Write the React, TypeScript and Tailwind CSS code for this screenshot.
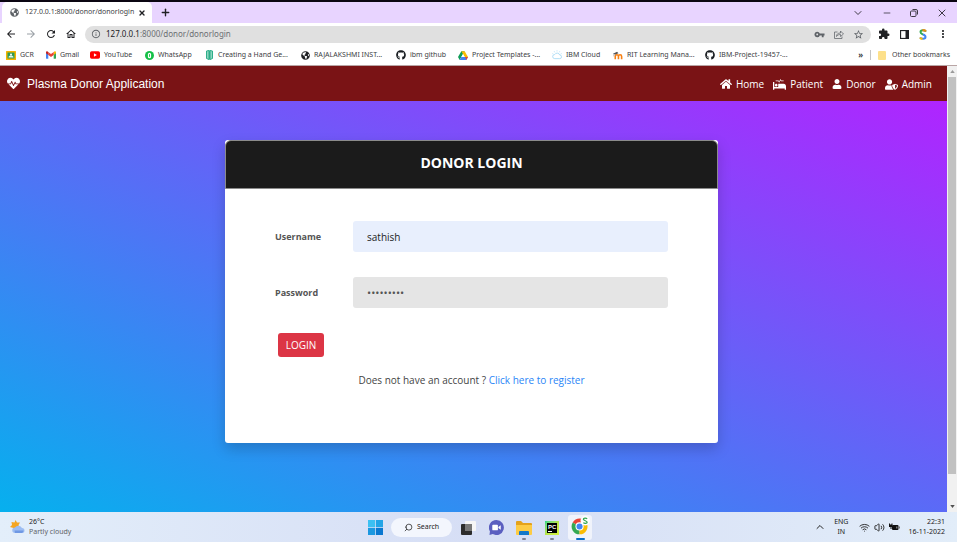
import type { ReactNode } from "react";
import {
  FaGithub,
  FaGlobeAmericas,
  FaHeartbeat,
  FaHome,
  FaProcedures,
  FaUser,
  FaUserShield,
} from "react-icons/fa";
import {
  MdArrowBack,
  MdArrowForward,
  MdExtension,
  MdInfoOutline,
  MdMoreVert,
  MdOutlineHome,
  MdRefresh,
  MdStarBorder,
  MdVpnKey,
} from "react-icons/md";
import { ChevronDown, ChevronUp, Minus, Plus, Search, Volume2, Wifi, X } from "lucide-react";

function ClassroomIcon() {
  return (
    <svg viewBox="0 0 20 18" className="h-[9px] w-[10px]">
      <rect width="20" height="18" rx="1" fill="#f4b400" />
      <rect x="3" y="3" width="14" height="12" fill="#2f9a56" />
      <circle cx="10" cy="7" r="2" fill="#fff" />
      <path d="M5 13c0-3 3-4 5-4s5 1 5 4z" fill="#e8f5e9" />
    </svg>
  );
}

function GmailIcon() {
  return (
    <svg viewBox="0 0 24 18" className="h-[8px] w-[10px]">
      <path d="M0 2v14a2 2 0 0 0 2 2h3.500V8z" fill="#4285f4" />
      <path d="M18.500 18H22a2 2 0 0 0 2-2V2l-5.500 6z" fill="#34a853" />
      <path d="M18.500 1.500V9L24 5V3c0-2.500-3-4-5.500-1.500z" fill="#fbbc04" />
      <path d="M5.500 9V1.500L12 6.500l6.500-5V9L12 14z" fill="#ea4335" />
      <path d="M0 3v2l5.500 4V1.500C3-1 0 .5 0 3z" fill="#c5221f" />
    </svg>
  );
}

function YouTubeIcon() {
  return (
    <svg viewBox="0 0 24 18" className="h-[8px] w-[11px]">
      <rect width="24" height="18" rx="4" fill="#f00" />
      <path d="M9.500 5v8l7-4z" fill="#fff" />
    </svg>
  );
}

function WhatsAppIcon() {
  return (
    <svg viewBox="0 0 20 20" className="size-[9px]">
      <circle cx="10" cy="10" r="10" fill="#16c047" />
      <rect x="6.500" y="4" width="7" height="12" rx="3.500" fill="#fff" />
      <path d="M10 7v6" stroke="#16c047" strokeWidth="2" />
    </svg>
  );
}

function HandIcon() {
  return (
    <svg viewBox="0 0 14 20" className="h-[10px] w-[7px]" fill="none" stroke="#2fae8a" strokeWidth="2">
      <path d="M1 2l5-1v18l-5-2zM13 2L8 1v18l5-2z" fill="#8fd6c0" />
      <path d="M7 1v18" />
    </svg>
  );
}

function DriveIcon() {
  return (
    <svg viewBox="0 0 24 21" className="h-[9px] w-[10px]">
      <path d="M8 0h8L8 14l-4 7-4-7z" fill="#0f9d58" />
      <path d="M8 0h8l8 14h-8z" fill="#fbbc04" />
      <path d="M8 14h16l-4 7H4z" fill="#4285f4" />
      <path d="M24 14h-7l3 7z" fill="#ea4335" />
      <path d="M12 7l4 7H8z" fill="#fff" />
    </svg>
  );
}

function CloudIcon() {
  return (
    <svg viewBox="0 0 22 20" className="h-[10px] w-[11px]" fill="none" stroke="#8fd0f2" strokeWidth="1.500">
      <path d="M6 18h11a4 4 0 0 0 0-8 6 6 0 0 0-11-1 4.500 4.500 0 0 0 0 9z" />
      <path d="M11 0v2M5 2l1 2M17 2l-1 2M1 7l2 1M21 7l-2 1" />
    </svg>
  );
}

function MoodleIcon() {
  return (
    <svg viewBox="0 0 22 18" className="h-[9px] w-[10px]" fill="none">
      <path d="M5 17v-6a3.500 3.500 0 0 1 7 0v6M12 17v-6a3.500 3.500 0 0 1 7 0v6" stroke="#f98012" strokeWidth="3.500" />
      <path d="M0 5l9-4 3 3-7 3z" fill="#555" />
      <path d="M2 5v6" stroke="#555" />
    </svg>
  );
}

type Bookmark = { label: string; icon: ReactNode; width: string };

const bookmarks: Bookmark[] = [
  { label: "GCR", icon: <ClassroomIcon />, width: "w-[40px]" },
  { label: "Gmail", icon: <GmailIcon />, width: "w-[44px]" },
  { label: "YouTube", icon: <YouTubeIcon />, width: "w-[54px]" },
  { label: "WhatsApp", icon: <WhatsAppIcon />, width: "w-[60px]" },
  { label: "Creating a Hand Ge...", icon: <HandIcon />, width: "w-[96px]" },
  { label: "RAJALAKSHMI INST...", icon: <FaGlobeAmericas className="size-[9px] text-[#202124]" />, width: "w-[96px]" },
  { label: "ibm github", icon: <FaGithub className="size-[10px] text-[#1b1f23]" />, width: "w-[62px]" },
  { label: "Project Templates -...", icon: <DriveIcon />, width: "w-[94px]" },
  { label: "IBM Cloud", icon: <CloudIcon />, width: "w-[61px]" },
  { label: "RIT Learning Mana...", icon: <MoodleIcon />, width: "w-[92px]" },
  { label: "IBM-Project-19457-...", icon: <FaGithub className="size-[10px] text-[#1b1f23]" />, width: "w-[96px]" },
];

function TabStrip() {
  return (
    <div className="flex h-[21px] items-stretch bg-[#e8d4ff] pl-[2px]">
      <div className="flex w-[150px] items-center rounded-t-[5px] bg-white pr-[6px] pl-[8px] text-[7px] text-[#3c4043]">
        <FaGlobeAmericas className="size-[9px] shrink-0 text-[#5f6368]" />
        <span className="ml-[6px] flex-1 whitespace-nowrap">127.0.0.1:8000/donor/donorlogin</span>
        <button aria-label="Close tab">
          <X className="size-[8px] text-[#202124]" strokeWidth={4} />
        </button>
      </div>
      <button aria-label="New tab" className="ml-[8px]">
        <Plus className="size-[11px] text-[#202124]" strokeWidth={3} />
      </button>
      <div className="ml-auto flex items-center gap-[18px] pr-[9px] text-[#3f3a46]">
        <button aria-label="Search tabs"><ChevronDown className="size-[12px]" strokeWidth={2} /></button>
        <button aria-label="Minimize"><Minus className="size-[10px]" strokeWidth={2} /></button>
        <button aria-label="Restore">
          <svg viewBox="0 0 16 16" className="size-[8px]" fill="none" stroke="currentColor" strokeWidth="2">
            <rect x="1" y="4" width="11" height="11" rx="2" />
            <path d="M5 1h7a3 3 0 0 1 3 3v7" />
          </svg>
        </button>
        <button aria-label="Close window"><X className="size-[12px]" strokeWidth={2} /></button>
      </div>
    </div>
  );
}

function Toolbar() {
  return (
    <div className="flex h-[22px] items-center bg-white pr-[8px] pl-[5px] text-[#202124]">
      <div className="flex items-center gap-[8px]">
        <button aria-label="Back"><MdArrowBack className="size-[12px]" /></button>
        <button aria-label="Forward"><MdArrowForward className="size-[12px] text-[#9aa0a6]" /></button>
        <button aria-label="Reload"><MdRefresh className="size-[12px]" /></button>
        <button aria-label="Home page"><MdOutlineHome className="size-[12px]" /></button>
      </div>
      <div className="ml-[8px] flex h-[17px] flex-1 items-center rounded-full bg-[#e0e0e0] pr-[7px] pl-[6px]">
        <MdInfoOutline className="size-[10px] text-[#5f6368]" />
        <div className="ml-[5px] flex-1 text-[8px]">
          127.0.0.1<span className="text-[#6b6f73]">:8000/donor/donorlogin</span>
        </div>
        <div className="flex items-center gap-[9px] text-[#5f6368]">
          <MdVpnKey className="size-[11px]" />
          <svg viewBox="0 0 20 18" className="h-[9px] w-[10px]" fill="none" stroke="currentColor" strokeWidth="1.500">
            <path d="M7 4H1v13h15v-4" />
            <path d="M5 13c0-5 3-7 8-7V2l6 6-6 5V9c-4 0-6 1-8 4z" />
          </svg>
          <MdStarBorder className="size-[11px]" />
        </div>
      </div>
      <div className="ml-[7px] flex items-center gap-[10px]">
        <MdExtension className="size-[12px]" />
        <svg viewBox="0 0 18 18" className="size-[9px]">
          <rect x="1" y="1" width="16" height="16" fill="none" stroke="#202124" strokeWidth="2.500" />
          <path d="M11 1h6v16h-6z" fill="#202124" />
        </svg>
        <svg viewBox="0 0 16 22" className="h-[11px] w-[8px]" fill="none" strokeWidth="4">
          <path d="M14 5C12 2 3 1 3 6c0 3 3 4 5 5" stroke="#34a853" />
          <path d="M14 5C12 2 9 2 7 3" stroke="#ea8a1a" />
          <path d="M8 11c3 1 5 2 5 5 0 5-9 4-11 1" stroke="#4285f4" />
          <path d="M7 20c-2 0-4-1-5-3" stroke="#fbbc04" />
        </svg>
        <button aria-label="Browser menu"><MdMoreVert className="size-[12px]" /></button>
      </div>
    </div>
  );
}

function BookmarkBar() {
  return (
    <div className="flex h-[21px] items-center border-b border-[#b9a5a5] bg-white pr-[7px] pl-[6px] text-[7px] text-[#3c4043]">
      {bookmarks.map((b) => (
        <a key={b.label} href="#" className={`flex shrink-0 items-center whitespace-nowrap ${b.width}`}>
          <span className="mr-[4px] flex w-[10px] shrink-0 justify-center">{b.icon}</span>
          {b.label}
        </a>
      ))}
      <span className="ml-auto text-[8px] font-bold">»</span>
      <span className="mx-[7px] h-[10px] w-px bg-[#c4c4c4]" />
      <a href="#" className="flex items-center gap-[6px] whitespace-nowrap">
        <span className="h-[9px] w-[8px] rounded-[1px] bg-[#fde08a]" />
        Other bookmarks
      </a>
    </div>
  );
}

function NavBar() {
  return (
    <nav className="flex h-[35px] shrink-0 items-center justify-between bg-[#7a1315] pr-[15px] pl-[7px] text-white">
      <a href="#" className="flex items-center gap-[7px] font-['Liberation_Sans',sans-serif] text-[12px]">
        <FaHeartbeat className="size-[13px]" />
        Plasma Donor Application
      </a>
      <ul className="flex items-center gap-[9px] pt-px text-[10px]">
        <li><a href="#" className="flex items-center gap-[4px]"><FaHome className="size-[12px]" />Home</a></li>
        <li><a href="#" className="flex items-center gap-[4px]"><FaProcedures className="size-[13px]" />Patient</a></li>
        <li><a href="#" className="flex items-center gap-[4px]"><FaUser className="size-[10px]" />Donor</a></li>
        <li><a href="#" className="flex items-center gap-[4px]"><FaUserShield className="size-[13px]" />Admin</a></li>
      </ul>
    </nav>
  );
}

function LoginCard() {
  return (
    <section className="w-[493px] rounded-[3px] bg-white pb-[56px] shadow-[0_6px_14px_rgba(0,0,0,0.18)]">
      <header className="flex h-[49px] items-center justify-center rounded-t-[6px] border border-[#8b8b8b] bg-[#1b1b1b] pb-[3px]">
        <h1 className="text-[14px] leading-[20px] font-bold text-white">DONOR LOGIN</h1>
      </header>
      <form className="px-[50px] pt-[32px]" onSubmit={(e) => e.preventDefault()}>
        <div className="flex items-center">
          <label htmlFor="username" className="w-[78px] text-[9px] font-bold text-[#555]">Username</label>
          <input
            id="username"
            type="text"
            defaultValue="sathish"
            className="h-[31px] min-w-0 flex-1 rounded-[3px] bg-[#e8effd] px-[14px] text-[10px] text-[#222] outline-none"
          />
        </div>
        <div className="mt-[25px] flex items-center">
          <label htmlFor="password" className="w-[78px] text-[9px] font-bold text-[#555]">Password</label>
          <input
            id="password"
            type="password"
            defaultValue="sathish12"
            className="h-[31px] min-w-0 flex-1 rounded-[3px] bg-[#e5e5e5] px-[14px] text-[11px] text-[#555] outline-none"
          />
        </div>
        <button type="submit" className="mt-[25px] ml-[3px] block h-[24px] w-[46px] rounded-[3px] bg-[#dc3545] text-[10px] text-white">
          LOGIN
        </button>
        <p className="mt-[16px] text-center text-[10px] leading-[14px] text-[#444]">
          Does not have an account ? <a href="#" className="text-[#2a85f7]">Click here to register</a>
        </p>
      </form>
    </section>
  );
}

function Scrollbar() {
  return (
    <div aria-hidden="true" className="flex w-[10px] shrink-0 flex-col items-center justify-between bg-[#f1f1f1]">
      <span className="flex h-[11px] items-center">
        <svg viewBox="0 0 6 4" className="h-[3px] w-[5px]"><path d="M0 4l3-4 3 4z" fill="#9a9a9a" /></svg>
      </span>
      <span className="mb-[27px] w-[8px] flex-1 bg-[#c1c1c1]" />
      <span className="flex h-[11px] items-center">
        <svg viewBox="0 0 6 4" className="h-[3px] w-[5px]"><path d="M0 0l3 4 3-4z" fill="#505050" /></svg>
      </span>
    </div>
  );
}

function WindowsIcon() {
  return (
    <svg viewBox="0 0 16 16" className="size-[15px]">
      <path d="M0 0h7.600v7.600H0z" fill="#3cc0f2" />
      <path d="M8.400 0H16v7.600H8.400z" fill="#22a4e6" />
      <path d="M0 8.400h7.600V16H0z" fill="#1c98e0" />
      <path d="M8.400 8.400H16V16H8.400z" fill="#0a78d0" />
    </svg>
  );
}

function TaskViewIcon() {
  return (
    <svg viewBox="0 0 15 14" className="h-[14px] w-[15px]">
      <rect x="4" width="11" height="10" rx="1" fill="#f6f6f6" />
      <rect y="3" width="11" height="11" rx="1" fill="#2c2c2c" />
      <path d="M4 3h7v7H4z" fill="#777" />
    </svg>
  );
}

function ChatIcon() {
  return (
    <svg viewBox="0 0 16 16" className="size-[15px]">
      <path d="M8 0a8 8 0 1 1-4 15l-3.500 1 .5-4A8 8 0 0 1 8 0z" fill="#5b5fc0" />
      <rect x="3.500" y="5" width="6" height="6" rx="1" fill="#fff" />
      <path d="M10 7.500L12.500 5.500v5L10 8.500z" fill="#fff" />
    </svg>
  );
}

function ExplorerIcon() {
  return (
    <svg viewBox="0 0 16 14" className="h-[14px] w-[16px]">
      <path d="M0 1a1 1 0 0 1 1-1h4l2 2h8a1 1 0 0 1 1 1v9H0z" fill="#e5a21a" />
      <path d="M0 4h16v9a1 1 0 0 1-1 1H1a1 1 0 0 1-1-1z" fill="#fdcb44" />
      <path d="M3 14v-3a1 1 0 0 1 1-1h8a1 1 0 0 1 1 1v3z" fill="#1377c9" />
    </svg>
  );
}

function PyCharmIcon() {
  return (
    <span className="flex size-[14px] items-center justify-center bg-linear-to-br from-[#21d789] via-[#b7e64c] to-[#d5ef3a]">
      <span className="flex size-[10px] flex-col items-start justify-between bg-black p-px font-['Liberation_Sans',sans-serif] text-[6px] leading-[6px] font-bold text-white">
        PC
        <span className="h-px w-[4px] bg-white" />
      </span>
    </span>
  );
}

function ChromeIcon() {
  return (
    <svg viewBox="0 0 20 20" className="size-[19px]">
      <path d="M9 11L1.800 6.800A8.300 8.300 0 0 1 16.200 6.800z" fill="#ea4335" />
      <path d="M9 11L1.800 6.800A8.300 8.300 0 0 0 9 19.300z" fill="#34a853" />
      <path d="M9 11l7.200-4.200A8.300 8.300 0 0 1 9 19.300z" fill="#fbbc04" />
      <circle cx="9" cy="11" r="4.300" fill="#fff" />
      <circle cx="9" cy="11" r="3.200" fill="#4285f4" />
      <circle cx="15" cy="5" r="5" fill="#fff" />
      <path d="M17 3c-1-1-4-1-4 .5S17 5 17 6.500 14 8 13 7" fill="none" stroke="#34a853" strokeWidth="1.300" />
    </svg>
  );
}

function TaskItem({ label, mark, active, children }: { label: string; mark?: string; active?: boolean; children: ReactNode }) {
  return (
    <button
      aria-label={label}
      className={`flex h-[25px] w-[24px] flex-col items-center justify-end rounded-[3px] ${active ? "bg-[#f0f3fb]" : ""}`}
    >
      {children}
      <span className={`mt-[3px] h-[2px] rounded-full ${mark ?? "w-0"}`} />
    </button>
  );
}

function Taskbar() {
  return (
    <footer className="grid h-[30px] shrink-0 grid-cols-[1fr_auto_1fr] items-center bg-linear-to-r from-[#e3eefa] via-[#d6def5] to-[#e2edf9] text-[7px] leading-[10px] text-[#222]">
      <div className="flex items-center gap-[4px] pl-[10px]">
        <svg viewBox="0 0 30 28" className="h-[14px] w-[15px]">
          <path d="M11 0l3 5 6 0-3 5 2 6H7L0 14l4-4-1-6 6 1z" fill="#f5a623" />
          <path d="M10 26h14a5 5 0 0 0 0-10 8 8 0 0 0-14-1 5.500 5.500 0 0 0 0 11z" fill="#9dbdf2" />
          <path d="M9 21h18a5 5 0 0 1-3 5H10z" fill="#6f98e4" />
        </svg>
        <div>
          <p>26°C</p>
          <p className="text-[#5f6368]">Partly cloudy</p>
        </div>
      </div>
      <div className="flex items-center gap-[4px] pr-[2px]">
        <TaskItem label="Start"><WindowsIcon /></TaskItem>
        <button className="flex h-[19px] w-[61px] items-center justify-center gap-[4px] rounded-full bg-[#f3f6fd]">
          <Search className="size-[9px] -scale-x-100" strokeWidth={2} />
          Search
        </button>
        <TaskItem label="Task view"><TaskViewIcon /></TaskItem>
        <TaskItem label="Chat"><ChatIcon /></TaskItem>
        <TaskItem label="File Explorer" mark="w-[4px] bg-[#7d8190]"><ExplorerIcon /></TaskItem>
        <TaskItem label="PyCharm" mark="w-[4px] bg-[#7d8190]"><PyCharmIcon /></TaskItem>
        <TaskItem label="Chrome" active mark="w-[9px] bg-[#0a6fc8]"><ChromeIcon /></TaskItem>
      </div>
      <div className="flex items-center justify-end pr-[12px]">
        <ChevronUp className="size-[12px]" strokeWidth={2} />
        <p className="ml-[8px] text-center">ENG<br />IN</p>
        <div className="mr-[8px] ml-[11px] flex items-center gap-[4px]">
          <Wifi className="size-[11px]" strokeWidth={2} />
          <Volume2 className="size-[11px]" strokeWidth={2} />
          <svg viewBox="0 0 22 16" className="h-[8px] w-[11px]">
            <path d="M0 1h2v2h3V1h2v7H0zM3 8h2v4H3z" fill="#111" />
            <rect x="6" y="4" width="13" height="10" rx="2" fill="#111" />
            <path d="M14 7h3v4h-3zM20 7h2v4h-2z" fill="#777" />
          </svg>
        </div>
        <p className="text-right">22:31<br />16-11-2022</p>
      </div>
    </footer>
  );
}

export default function App() {
  return (
    <div className="flex h-screen flex-col overflow-hidden border-t-2 border-[#0b0612] bg-white font-['Noto_Sans','Open_Sans',sans-serif]">
      <TabStrip />
      <Toolbar />
      <BookmarkBar />
      <div className="flex min-h-0 flex-1">
        <div className="flex min-w-0 flex-1 flex-col font-['Open_Sans','Noto_Sans',sans-serif]">
          <NavBar />
          <main className="flex min-h-0 flex-1 items-start justify-center bg-[linear-gradient(to_top_right,#06b0ee,#b024ff)] pt-[39px] pr-[4px]">
            <LoginCard />
          </main>
        </div>
        <Scrollbar />
      </div>
      <Taskbar />
    </div>
  );
}
